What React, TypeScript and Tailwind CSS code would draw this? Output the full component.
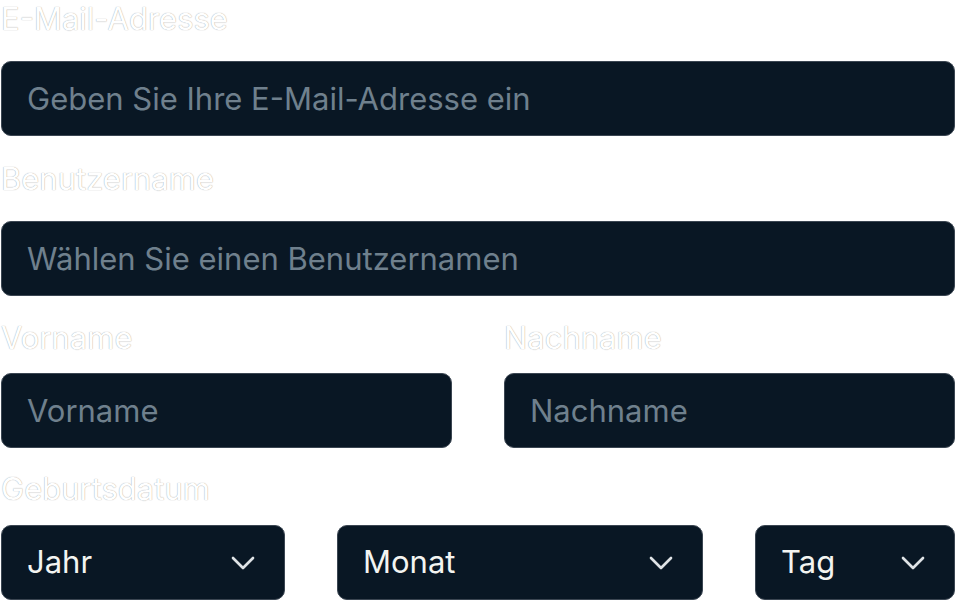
import { ChevronDown } from 'lucide-react'

const font = { fontFamily: 'Inter, "Noto Sans", sans-serif' }

function Label({ children, className = '' }: { children: React.ReactNode; className?: string }) {
  return (
    <label className={`block text-[31px] leading-[38px] text-white [text-shadow:0_0_1px_rgba(0,0,0,0.45)] ${className}`}>
      {children}
    </label>
  )
}

function Field({ placeholder }: { placeholder: string }) {
  return (
    <input
      placeholder={placeholder}
      className="block w-full h-[75px] rounded-[10px] border border-[#3b4652] bg-[#091724] px-[25px] text-[31px] text-white placeholder:text-[#6f808d] outline-none"
    />
  )
}

function Select({ label, className }: { label: string; className: string }) {
  return (
    <div className={`flex h-[75px] items-center justify-between rounded-[10px] border border-[#3b4652] bg-[#091724] pl-[25px] pr-[21px] text-[31px] text-[#f3f4f1] ${className}`}>
      <span>{label}</span>
      <ChevronDown size={40} strokeWidth={1.6} className="text-[#dfe3e6]" />
    </div>
  )
}

export default function App() {
  return (
    <div className="w-[956px] h-[612px] bg-white px-px" style={font}>
      <div>
        <Label className="mb-[23px]">E-Mail-Adresse</Label>
        <Field placeholder="Geben Sie Ihre E-Mail-Adresse ein" />
      </div>

      <div className="mt-[24px]">
        <Label className="mb-[23px]">Benutzername</Label>
        <Field placeholder="Wählen Sie einen Benutzernamen" />
      </div>

      <div className="mt-[23px] flex gap-[52px]">
        <div className="flex-1">
          <Label className="mb-[16px]">Vorname</Label>
          <Field placeholder="Vorname" />
        </div>
        <div className="flex-1">
          <Label className="mb-[16px]">Nachname</Label>
          <Field placeholder="Nachname" />
        </div>
      </div>

      <div className="mt-[22px]">
        <Label className="mb-[17px]">Geburtsdatum</Label>
        <div className="flex gap-[52px]">
          <Select label="Jahr" className="w-[284px]" />
          <Select label="Monat" className="w-[366px]" />
          <Select label="Tag" className="w-[200px]" />
        </div>
      </div>
    </div>
  )
}
